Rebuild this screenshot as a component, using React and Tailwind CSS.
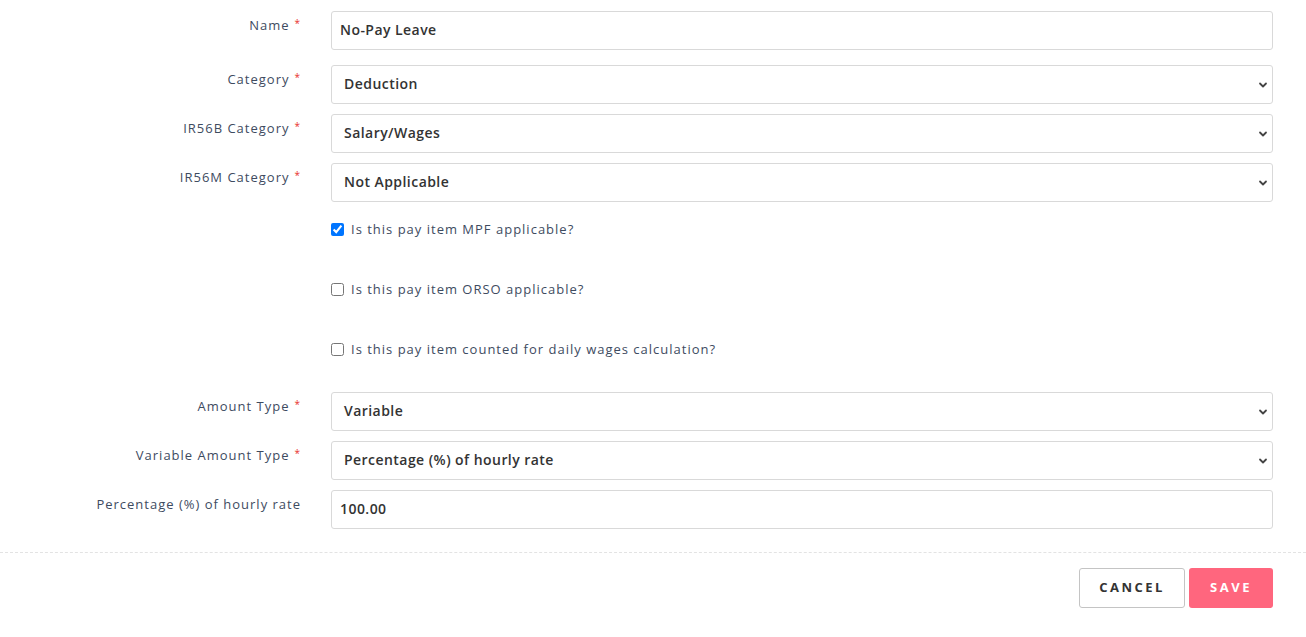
import React from "react";

const Chevron = () => (
  <svg className="pointer-events-none absolute right-[4px] top-1/2 -translate-y-1/2" width="10" height="10" viewBox="0 0 10 10">
    <path d="M2 3.5 L5 6.5 L8 3.5" fill="none" stroke="#444" strokeWidth="1.8" strokeLinecap="round" strokeLinejoin="round" />
  </svg>
);

const Label = ({ children, req, className = "" }) => (
  <div className={"w-[331px] shrink-0 pr-[30px] text-right text-[13px] tracking-[1px] text-[#3e4b5f] " + className}>
    {children}
    {req && <span className="ml-[5px] align-top text-[10px] text-[#e8322c]">*</span>}
  </div>
);

const Field = ({ label, req, value, select, mt = "mt-[10px]" }) => (
  <div className={"flex items-start " + mt}>
    <Label req={req} className="pt-[5px]">{label}</Label>
    <div className="relative h-[39px] w-[942px] rounded-[3px] border border-[#d9d9d9] bg-white">
      <div className={"flex h-full items-center pb-[2px] text-[14px] font-semibold tracking-[0.45px] text-[#333] " + (select ? "pl-[12px]" : "pl-[8px]")}>
        {value}
      </div>
      {select && <Chevron />}
    </div>
  </div>
);

const Check = ({ label, checked, h = "h-[60px]" }) => (
  <div className={"flex items-start pl-[331px] " + h}>
    <label className="flex items-center gap-[7px] text-[13px] tracking-[1px] text-[#3e4b5f]">
      <input type="checkbox" defaultChecked={checked} className="m-0 h-[13px] w-[13px] accent-[#0075ff]" />
      {label}
    </label>
  </div>
);

export default function App() {
  return (
    <div className="h-[637px] w-[1306px] bg-white" style={{ fontFamily: '"Open Sans", "Liberation Sans", sans-serif' }}>
      <div className="pt-[11px]">
        <Field label="Name" req value="No-Pay Leave" mt="mt-0" />
        <Field label="Category" req value="Deduction" select mt="mt-[15px]" />
        <Field label="IR56B Category" req value="Salary/Wages" select />
        <Field label="IR56M Category" req value="Not Applicable" select />
        <div className="pt-[18px]">
          <Check label="Is this pay item MPF applicable?" checked />
          <Check label="Is this pay item ORSO applicable?" />
          <Check label="Is this pay item counted for daily wages calculation?" h="h-[52px]" />
        </div>
        <Field label="Amount Type" req value="Variable" select mt="mt-0" />
        <Field label="Variable Amount Type" req value="Percentage (%) of hourly rate" select />
        <Field label="Percentage (%) of hourly rate" value="100.00" />
      </div>
      <div className="mt-[23px] border-t border-dashed border-[#e3e3e3]" />
      <div className="flex justify-end gap-[4px] pr-[33px] pt-[15px]">
        <button className="h-[40px] w-[106px] rounded-[3px] border border-[#c4c4c4] bg-white text-[13px] font-bold tracking-[2.5px] text-[#333]">
          CANCEL
        </button>
        <button className="h-[40px] w-[84px] rounded-[3px] bg-[#ff667e] text-[13px] font-bold tracking-[2.5px] text-white">
          SAVE
        </button>
      </div>
    </div>
  );
}
